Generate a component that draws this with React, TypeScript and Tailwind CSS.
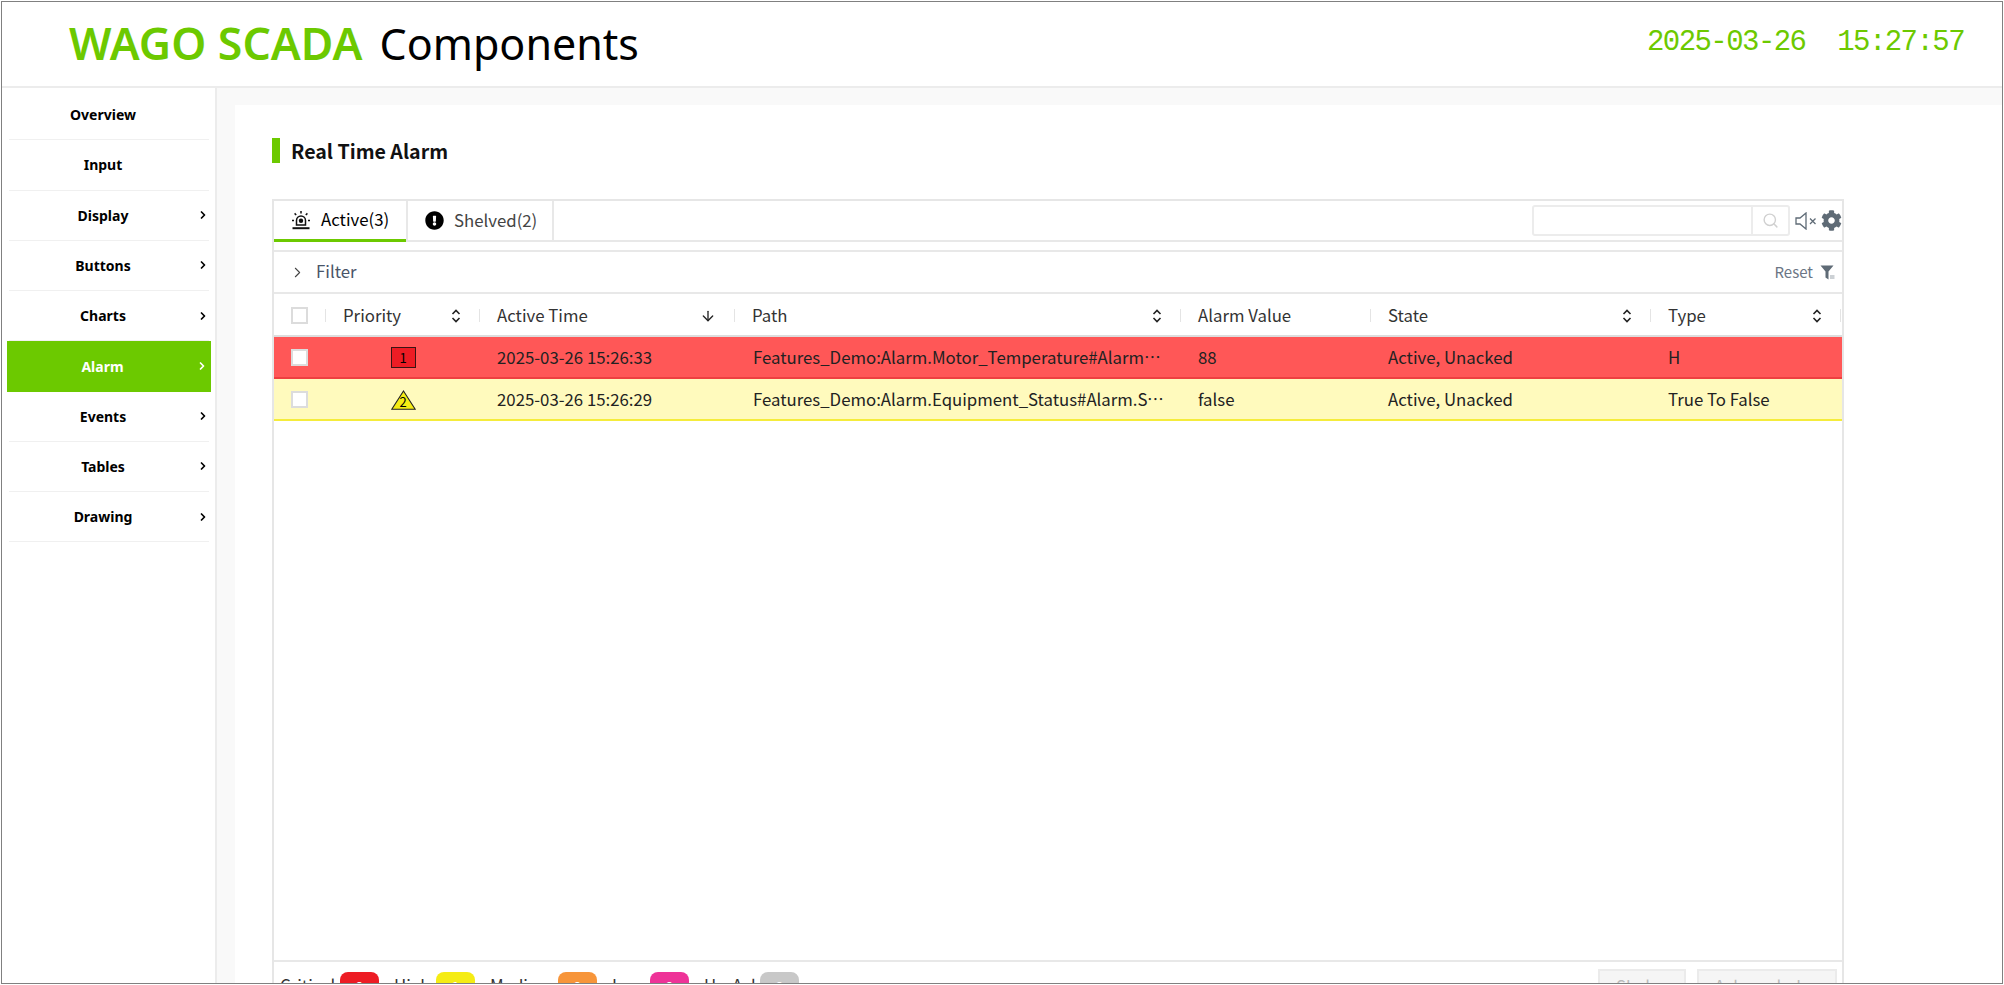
import { ChevronRight, Search, ArrowDown } from "lucide-react";
import { FaCog, FaExclamationCircle } from "react-icons/fa";

const menu = [
  { label: "Overview", sub: false },
  { label: "Input", sub: false },
  { label: "Display", sub: true },
  { label: "Buttons", sub: true },
  { label: "Charts", sub: true },
  { label: "Alarm", sub: true, active: true },
  { label: "Events", sub: true },
  { label: "Tables", sub: true },
  { label: "Drawing", sub: true },
];

const gridCols = "grid grid-cols-[51px_154px_255px_446px_190px_280px_190px_1fr]";

const columns = [
  { label: "Priority", sort: "both" },
  { label: "Active Time", sort: "desc" },
  { label: "Path", sort: "both" },
  { label: "Alarm Value", sort: "none" },
  { label: "State", sort: "both" },
  { label: "Type", sort: "both" },
];

const rows = [
  {
    level: 1,
    time: "2025-03-26 15:26:33",
    path: "Features_Demo:Alarm.Motor_Temperature#Alarm.State.Motor_Temperature_High",
    value: "88",
    state: "Active, Unacked",
    type: "H",
    cls: "bg-[#ff5757] border-[#ee4040]",
  },
  {
    level: 2,
    time: "2025-03-26 15:26:29",
    path: "Features_Demo:Alarm.Equipment_Status#Alarm.State.Equipment_Status_False",
    value: "false",
    state: "Active, Unacked",
    type: "True To False",
    cls: "bg-[#fffabd] border-[#f5ec3b]",
  },
];

const counters = [
  { label: "Critical", count: 0, cls: "bg-[#ed1c24] text-white", w: "w-[60px]" },
  { label: "High", count: 1, cls: "bg-[#f5ec14] text-white", w: "w-[42px]" },
  { label: "Medium", count: 0, cls: "bg-[#f7953a] text-white", w: "w-[68px]" },
  { label: "Low", count: 0, cls: "bg-[#ee3398] text-white", w: "w-[38px]" },
  { label: "Un-Ack", count: 0, cls: "bg-[#c8c8c8] text-white", w: "w-[56px]" },
];

const SortIcon = () => (
  <svg width="10" height="14" viewBox="0 0 10 14" fill="none" stroke="#222" strokeWidth="1.6">
    <path d="M1.5 5 L5 1.5 L8.5 5" />
    <path d="M1.5 9 L5 12.5 L8.5 9" />
  </svg>
);

const SirenIcon = () => (
  <svg width="20" height="20" viewBox="0 0 20 20" fill="none" stroke="#111" strokeWidth="1.5">
    <path d="M5.5 15 V10.5 a4.5 4.5 0 0 1 9 0 V15 Z" />
    <circle cx="10" cy="10.7" r="2.2" fill="#111" stroke="none" />
    <path d="M1.5 18.2 H18.5" strokeWidth="2" />
    <path d="M10 1 V3.5 M3.6 3.4 L5.2 5 M16.4 3.4 L14.8 5 M1 10.5 H3 M17 10.5 H19" />
  </svg>
);

const MuteIcon = () => (
  <svg width="22" height="18" viewBox="0 0 22 18" fill="none" stroke="#5f6b76" strokeWidth="1.3">
    <path d="M1 6 H5 L11 1 V17 L5 12 H1 Z" />
    <path d="M15 6.5 L20.5 12 M20.5 6.5 L15 12" />
  </svg>
);

const FunnelIcon = () => (
  <svg width="15" height="15" viewBox="0 0 15 15">
    <path d="M0.5 0.5 H13.5 L8.5 6.5 V14.5 L5.5 12.5 V6.5 Z" fill="#5f6b76" />
    <path d="M10 11 H14.5 M10 13 H14.5" stroke="#9aa3ab" strokeWidth="1" />
  </svg>
);

const PriorityBadge = ({ level }: { level: number }) =>
  level === 1 ? (
    <span className="w-[25px] h-[21px] bg-[#ed1c24] border-[1.5px] border-[#3a1414] flex items-center justify-center text-[13px] leading-none text-black">
      1
    </span>
  ) : (
    <span className="relative w-[25px] h-[20px] flex items-center justify-center">
      <svg width="25" height="20" viewBox="0 0 25 20" className="absolute inset-0">
        <path d="M12.5 1 L24.2 19.2 H0.8 Z" fill="#f5ec14" stroke="#222" strokeWidth="1.1" />
      </svg>
      <span className="relative text-[13px] leading-none text-black mt-[4px]">2</span>
    </span>
  );

const Checkbox = () => <span className="block w-[17px] h-[17px] border-2 border-[#dcdcdc] bg-white" />;

export default function App() {
  return (
    <div className="w-[2004px] h-[985px] p-px bg-white font-['Noto_Sans_CJK_KR','Noto_Sans',sans-serif]">
      <div className="h-full border border-[#808080] overflow-hidden flex flex-col">
        {/* Header */}
        <header className="h-[86px] shrink-0 border-b-2 border-[#ececec] flex items-center justify-between pl-[67px] pr-[38px]">
          <h1 className="leading-none font-['Noto_Sans',sans-serif] flex items-baseline gap-[17px] -mt-[2px]">
            <span className="text-[44.6px] text-[#6cc900] font-semibold">WAGO SCADA</span>
            <span className="text-[43px] text-black">Components</span>
          </h1>
          <div className="font-['Liberation_Mono',monospace] text-[29px] leading-none tracking-[-1.55px] text-[#6cc900] whitespace-pre -mt-[4px]">
            2025-03-26  15:27:57
          </div>
        </header>

        <div className="flex-1 flex min-h-0">
          {/* Sidebar */}
          <nav className="w-[215px] shrink-0 border-r-2 border-[#ececec] pt-[2px] font-['Noto_Sans',sans-serif]">
            {menu.map((item) => (
              <div
                key={item.label}
                className={`h-[50.25px] flex items-center ml-[5px] mr-[4px] pr-[3px] text-[14px] font-bold ${
                  item.active ? "bg-[#6cc900] text-white" : "text-black"
                }`}
              >
                <div
                  className={`flex-1 h-full flex items-center ${
                    item.active ? "" : "border-b border-[#f0f0f0] ml-[2px] -mr-[1px]"
                  }`}
                >
                  <span className={`flex-1 text-center ${item.active ? "pl-[2px]" : ""}`}>{item.label}</span>
                  <span className="w-[12px] h-[12px] flex items-center justify-center">
                    {item.sub && <ChevronRight size={16} strokeWidth={3.5} />}
                  </span>
                </div>
              </div>
            ))}
          </nav>

          {/* Content */}
          <main className="flex-1 min-w-0 bg-[#f9f9f9] pt-[17px] pl-[18px]">
            <div className="h-full bg-white pl-[37px] pt-[33px] overflow-hidden">
              <div className="h-[25px] flex items-center">
                <span className="w-[8px] h-[25px] bg-[#6cc900]" />
                <h2 className="ml-[11px] text-[19.6px] font-semibold text-[#111]">Real Time Alarm</h2>
              </div>

              {/* Alarm table */}
              <div className="mt-[36px] w-[1572px] border-2 border-b-0 border-[#e6e6e6] text-[16.8px]">
                {/* Tabs */}
                <div className="h-[41px] flex items-stretch justify-between border-b-2 border-[#e8e8e8]">
                  <div className="flex">
                    <div className="w-[132px] border-b-[3px] border-[#6cc900] -mb-[2px] flex items-center pl-[17px] gap-[10px] text-black">
                      <SirenIcon />
                      <span>Active(3)</span>
                    </div>
                    <div className="w-[148px] border-x-2 border-[#e8e8e8] flex items-center pl-[17px] gap-[10px] text-[#444]">
                      <FaExclamationCircle size={19} className="text-black" />
                      <span>Shelved(2)</span>
                    </div>
                  </div>
                  <div className="flex items-center">
                    <div className="w-[258px] h-[31px] border-2 border-[#ececec] rounded-[3px] flex justify-end">
                      <div className="w-[37px] border-l-2 border-[#ececec] flex items-center justify-center">
                        <Search size={17} className="text-[#d0d0d0]" />
                      </div>
                    </div>
                    <span className="ml-[5px]">
                      <MuteIcon />
                    </span>
                    <FaCog size={21} className="text-[#5f6b76] ml-[4px]" />
                  </div>
                </div>

                {/* Filter bar */}
                <div className="mt-[8px] h-[44px] border-y-2 border-[#e8e8e8] flex items-center justify-between pl-[15px] pr-[7px]">
                  <div className="flex items-center gap-[10px] text-[#4a5568]">
                    <ChevronRight size={17} strokeWidth={1.5} className="text-[#444]" />
                    <span>Filter</span>
                  </div>
                  <div className="flex items-center gap-[7px] text-[15px] text-[#6b7685]">
                    <span>Reset</span>
                    <FunnelIcon />
                  </div>
                </div>

                {/* Table head */}
                <div className={`${gridCols} h-[43px] pt-[2px] border-b-2 border-[#dddddd] text-[#333]`}>
                  <div className="flex items-center pl-[17px]">
                    <Checkbox />
                  </div>
                  {columns.map((col) => (
                    <div key={col.label} className="flex items-center pl-[18px] pr-[18px] relative">
                      <span className="absolute left-0 top-[13px] h-[13px] w-px bg-[#e4e4e4]" />
                      <span className="flex-1">{col.label}</span>
                      {col.sort === "both" && <SortIcon />}
                      {col.sort === "desc" && <ArrowDown size={16} strokeWidth={2} className="text-[#222]" />}
                    </div>
                  ))}
                  <div className="relative">
                    <span className="absolute left-0 top-[13px] h-[13px] w-px bg-[#e4e4e4]" />
                  </div>
                </div>

                {/* Rows */}
                {rows.map((row) => (
                  <div key={row.level} className={`${gridCols} h-[42px] pt-px border-b-2 items-center text-[#222] ${row.cls}`}>
                    <div className="pl-[17px]">
                      <Checkbox />
                    </div>
                    <div className="flex justify-center pl-[2px]">
                      <PriorityBadge level={row.level} />
                    </div>
                    <div className="pl-[18px]">{row.time}</div>
                    <div className="pl-[19px] pr-[15px] truncate">{row.path}</div>
                    <div className="pl-[18px]">{row.value}</div>
                    <div className="pl-[18px]">{row.state}</div>
                    <div className="pl-[18px]">{row.type}</div>
                  </div>
                ))}

                <div className="h-[539px]" />

                {/* Footer */}
                <div className="h-[60px] border-t-2 border-[#e8e8e8] flex items-start justify-between pl-[6px] pr-[5px]">
                  <div className="flex pt-[10px] text-[#333]">
                    {counters.map((c) => (
                      <div key={c.label} className="flex items-center mr-[15px]">
                        <span className={`${c.w} whitespace-nowrap`}>{c.label}</span>
                        <span className={`w-[39px] h-[28px] rounded-[8px] flex items-center justify-center text-[14px] font-bold ${c.cls}`}>
                          {c.count}
                        </span>
                      </div>
                    ))}
                  </div>
                  <div className="flex gap-[11px] pt-[7px]">
                    <button className="w-[88px] h-[36px] bg-[#f5f5f5] border-2 border-[#ebebeb] text-[#bbbbbb]">Shelve</button>
                    <button className="w-[140px] h-[36px] bg-[#f5f5f5] border-2 border-[#ebebeb] text-[#bbbbbb]">Acknowledge</button>
                  </div>
                </div>
              </div>
            </div>
          </main>
        </div>
      </div>
    </div>
  );
}
